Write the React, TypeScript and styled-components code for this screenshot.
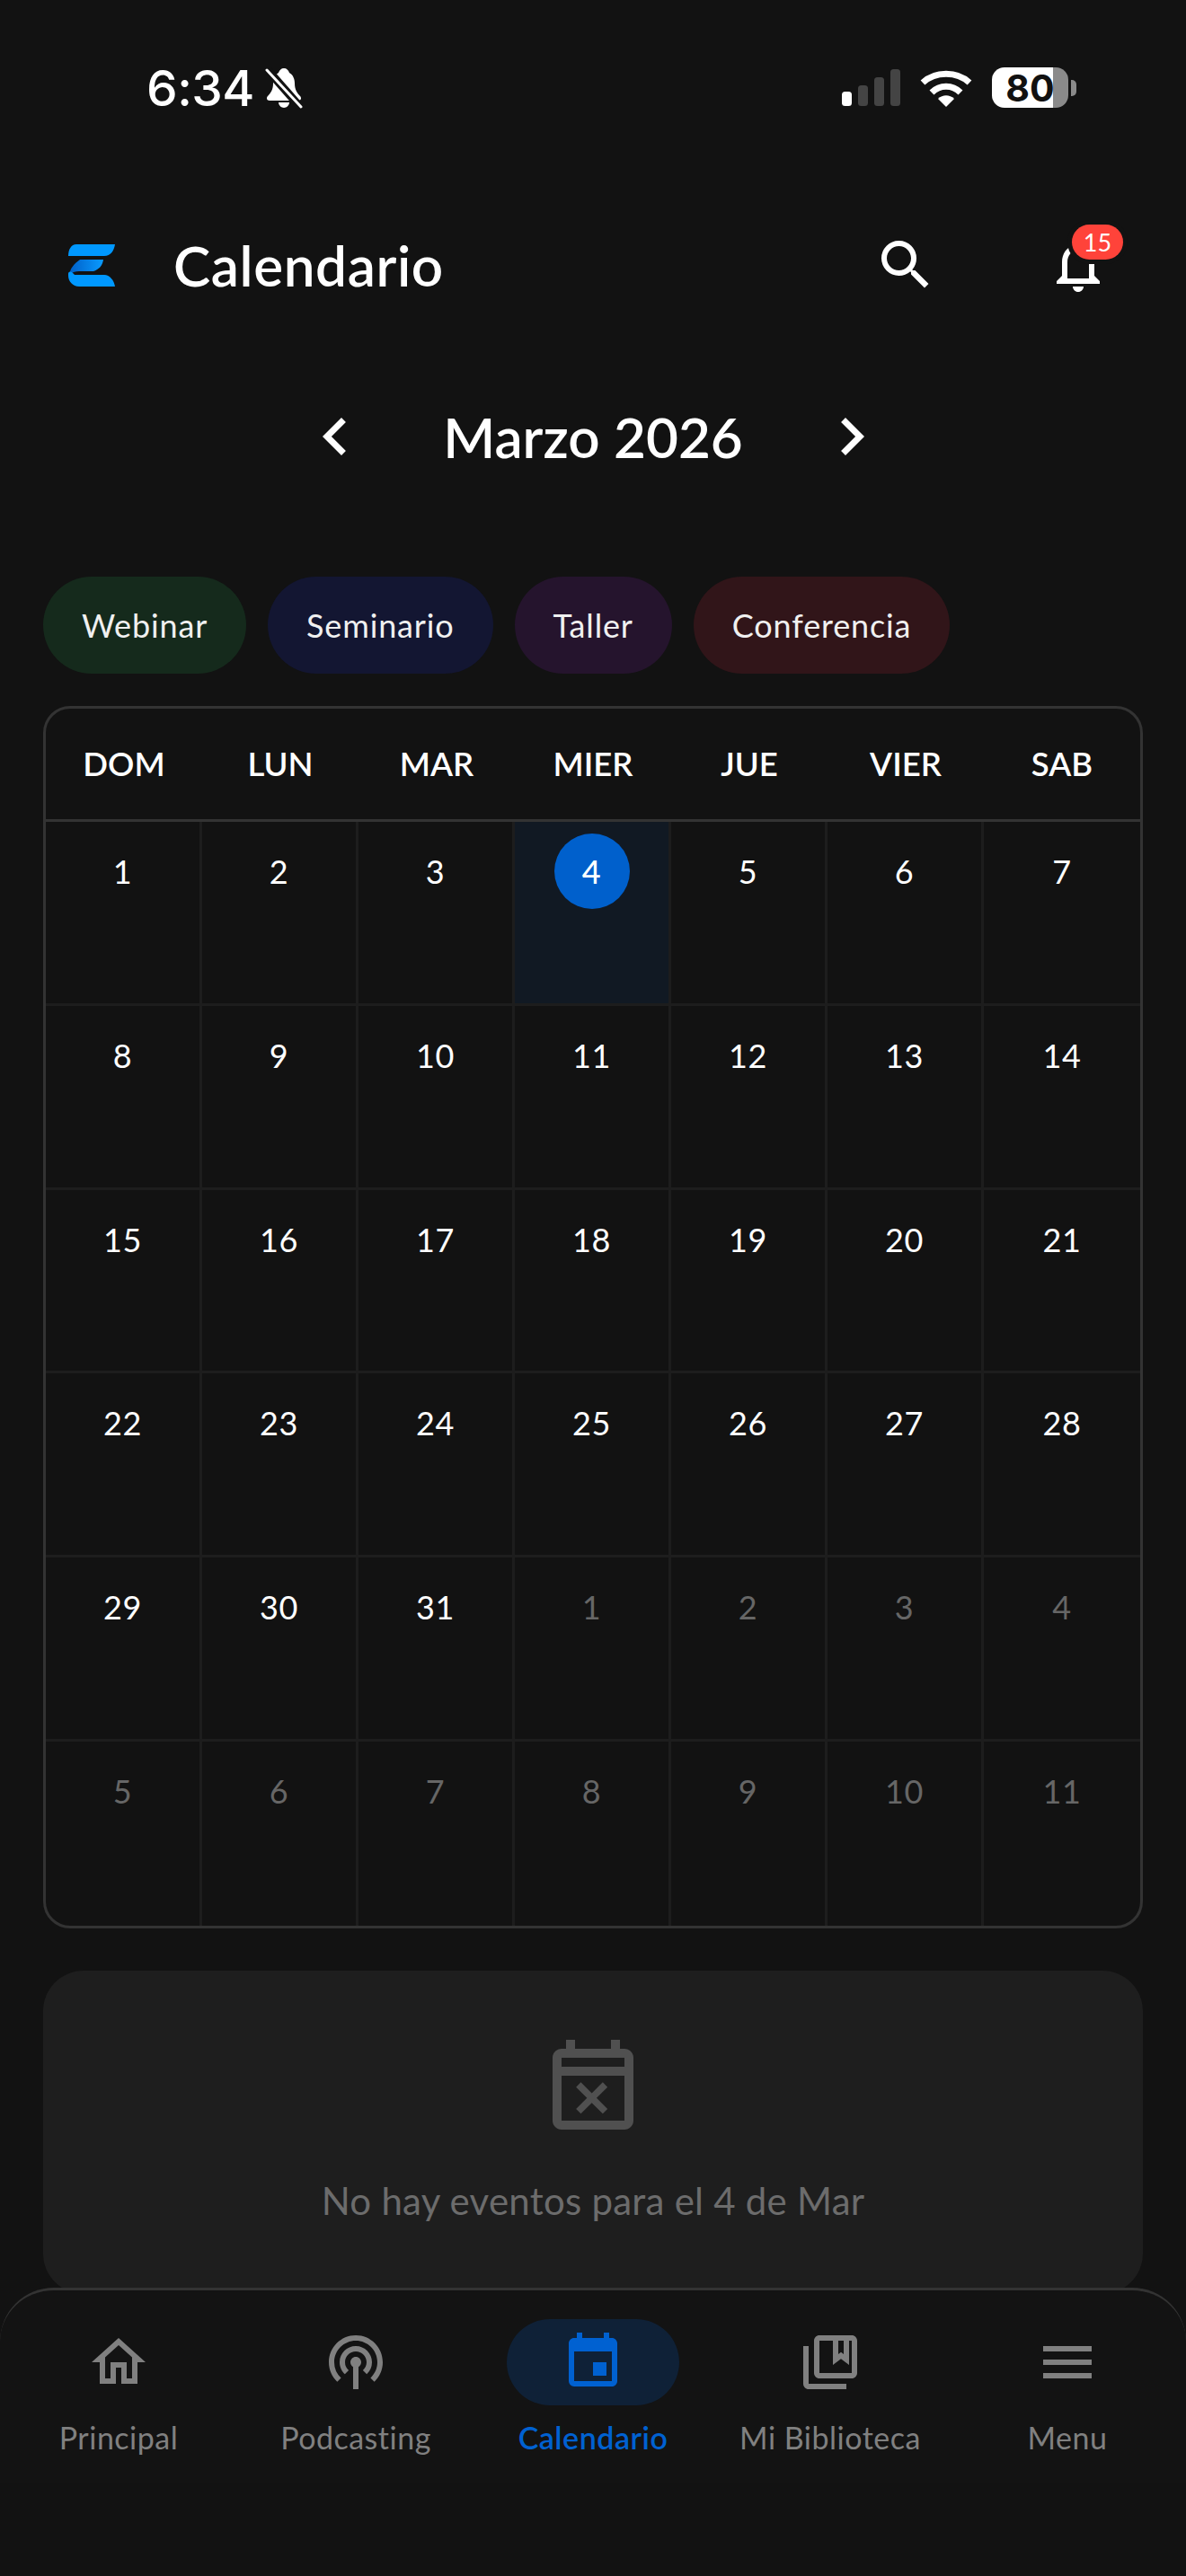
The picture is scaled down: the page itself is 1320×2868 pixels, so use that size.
import React from "react";
import styled, { createGlobalStyle } from "styled-components";
import {
  MdChevronLeft, MdChevronRight, MdEvent, MdMenu, MdNotificationsNone,
  MdOutlineCollectionsBookmark, MdOutlineEventBusy, MdOutlineHome, MdOutlinePodcasts, MdSearch,
} from "react-icons/md";

const Global = createGlobalStyle`
  html, body { margin: 0; padding: 0; background: #121212; }
  * { box-sizing: border-box; }
`;

const Screen = styled.div`
  position: relative;
  width: 1320px;
  height: 2868px;
  overflow: hidden;
  background: #121212;
  color: #fff;
  font-family: Lato, "Liberation Sans", sans-serif;
`;

const StatusBar = styled.div`
  display: flex;
  justify-content: space-between;
  align-items: center;
  height: 195px;
  padding: 0 122px 0 163px;
`;
const StatusGroup = styled.div`
  display: flex;
  align-items: center;
  gap: ${(p: { $gap: number }) => p.$gap}px;
`;
const Clock = styled.span`
  font-family: Inter, sans-serif;
  font-size: 55px;
  font-weight: 500;
  line-height: 56px;
  letter-spacing: -0.5px;
`;
const Battery = styled.div`
  display: flex;
  align-items: center;
  justify-content: center;
  width: 85px;
  height: 45px;
  border-radius: 14px;
  background: linear-gradient(90deg, #fff 0 80%, #8a8a8a 80% 100%);
  color: #111;
  font-family: Inter, sans-serif;
  font-size: 41px;
  font-weight: 700;
`;
const BatteryCap = styled.div`
  width: 6px;
  height: 18px;
  margin-left: 3px;
  border-radius: 0 5px 5px 0;
  background: #8a8a8a;
`;
const BatteryWrap = styled.div`
  display: flex;
  align-items: center;
`;

const Header = styled.header`
  display: flex;
  align-items: center;
  height: 200px;
  padding-left: 76px;
`;
const Title = styled.h1`
  margin: 0 0 0 65px;
  font-size: 62px;
  font-weight: 600;
  line-height: 72px;
  letter-spacing: 0.6px;
  flex: 1;
`;
const IconButton = styled.button`
  position: relative;
  display: flex;
  padding: 0;
  border: 0;
  background: none;
  color: #fff;
  margin-right: ${(p: { $mr: number }) => p.$mr}px;
`;
const Badge = styled.span`
  position: absolute;
  top: -9px;
  left: 29px;
  display: flex;
  align-items: center;
  justify-content: center;
  width: 57px;
  height: 39px;
  border-radius: 20px;
  background: #ff433a;
  box-shadow: 0 0 0 5px #121212;
  font-family: Lato, sans-serif;
  font-size: 27px;
  color: #fff;
`;

const MonthRow = styled.div`
  display: flex;
  align-items: center;
  justify-content: center;
  height: 120px;
  margin-top: 31px;
`;
const MonthTitle = styled.h2`
  margin: 0;
  width: 455px;
  text-align: center;
  font-size: 62px;
  font-weight: 600;
  line-height: 72px;
`;
const Chevron = styled.span`
  display: flex;
  width: 120px;
  justify-content: center;
  color: #fff;
`;

const Chips = styled.div`
  display: flex;
  gap: 24px;
  margin: 96px 48px 36px;
`;
const Chip = styled.div<{ $bg: string }>`
  display: flex;
  align-items: center;
  height: 108px;
  padding: 0 43px;
  border-radius: 54px;
  background: ${(p) => p.$bg};
  font-size: 36px;
  letter-spacing: 0.85px;
  color: #f0f0f0;
`;

const Calendar = styled.div`
  margin: 0 48px;
  border: 3px solid #333;
  border-radius: 30px;
  overflow: hidden;
`;
const WeekHeader = styled.div`
  display: grid;
  grid-template-columns: repeat(7, 1fr);
  height: 126px;
  padding-bottom: 1px;
  border-bottom: 3px solid #333;
`;
const WeekDay = styled.div`
  display: flex;
  align-items: center;
  justify-content: center;
  font-size: 36.5px;
  font-weight: 600;
`;
const Grid = styled.div`
  display: grid;
  grid-template-columns: repeat(7, 1fr);
  grid-auto-rows: 204.8px;
`;
const Cell = styled.div<{ $today?: boolean }>`
  display: flex;
  justify-content: center;
  padding-top: 13px;
  border-right: 3px solid #1d1d1d;
  border-bottom: 3px solid #1d1d1d;
  background: ${(p) => (p.$today ? "#111923" : "transparent")};
  &:nth-child(7n) { border-right: 0; }
  &:nth-last-child(-n + 7) { border-bottom: 0; }
`;
const DayNum = styled.span<{ $muted?: boolean; $today?: boolean }>`
  display: flex;
  align-items: center;
  justify-content: center;
  width: 84px;
  height: 84px;
  border-radius: 50%;
  font-size: 36px;
  letter-spacing: 0.5px;
  font-weight: ${(p) => (p.$today ? 500 : 400)};
  color: ${(p) => (p.$muted ? "#666" : "#fff")};
  background: ${(p) => (p.$today ? "#0060cc" : "transparent")};
`;

const EmptyCard = styled.div`
  display: flex;
  flex-direction: column;
  align-items: center;
  margin: 47px 48px 0;
  height: 360px;
  padding-top: 72px;
  border-radius: 45px;
  background: #1e1e1e;
  color: #505050;
`;
const EmptyText = styled.p`
  margin: 40px 0 0;
  font-size: 42px;
  line-height: 48px;
  letter-spacing: 0.25px;
  color: #6c6c6c;
`;

const Nav = styled.nav`
  position: absolute;
  left: 0;
  right: 0;
  top: 2547px;
  height: 321px;
  display: grid;
  grid-template-columns: repeat(5, 1fr);
  align-content: start;
  padding-top: 32px;
  background: linear-gradient(#131313 0 215px, #121212 215px);
  border-top: 3px solid #333;
  border-radius: 60px 60px 0 0;
`;
const NavItem = styled.div<{ $active?: boolean }>`
  display: flex;
  flex-direction: column;
  align-items: center;
  color: ${(p) => (p.$active ? "#0061d1" : "#808080")};
`;
const NavIcon = styled.div<{ $active?: boolean }>`
  display: flex;
  align-items: center;
  justify-content: center;
  width: 192px;
  height: 96px;
  border-radius: 48px;
  background: ${(p) => (p.$active ? "#0f2137" : "transparent")};
`;
const NavLabel = styled.span<{ $active?: boolean }>`
  margin-top: 16px;
  font-size: 34px;
  line-height: 40px;
  font-weight: ${(p) => (p.$active ? 600 : 400)};
  letter-spacing: 0.5px;
`;

const Logo = () => (
  <svg width="52" height="47" viewBox="0 0 52 47">
    <defs>
      <linearGradient id="lg" x1="0" y1="0" x2="1" y2="0">
        <stop offset="0" stopColor="#0060c8" />
        <stop offset="1" stopColor="#0a9bff" />
      </linearGradient>
    </defs>
    <path d="M9 0H52C51 7 47 13 40 13H0C0 6 3 0 9 0Z" fill="#0098ff" />
    <path d="M13 17H39C38 24 34 28 28 30H12C8 30 5 31 2 33C1 28 7 21 13 17Z" fill="url(#lg)" />
    <path d="M0 33C0 30 3 29 7 34H40C46 34 51 40 52 47H12C5 47 0 41 0 35Z" fill="#0098ff" />
  </svg>
);
const MutedBell = () => (
  <svg width="42" height="46" viewBox="0 0 42 46" fill="#fff">
    <path d="M21 1c3 0 5 2 6 5 4 2 6 7 6 12 0 7 3 11 6 14 2 2 1 5-2 5H5c-3 0-4-3-2-5 3-3 6-7 6-14 0-5 2-10 6-12 1-3 3-5 6-5Z" />
    <path d="M15 39h12c0 3-3 6-6 6s-6-3-6-6Z" />
    <path d="M3 3l36 41" stroke="#121212" strokeWidth="9" />
    <path d="M2 3l38 41" stroke="#fff" strokeWidth="3" strokeLinecap="round" />
  </svg>
);
const Signal = () => (
  <svg width="65" height="41" viewBox="0 0 65 41">
    <rect x="0" y="25" width="11" height="16" rx="3.5" fill="#fff" />
    <rect x="18" y="18" width="11" height="23" rx="3.5" fill="#444" />
    <rect x="36" y="9" width="11" height="32" rx="3.5" fill="#444" />
    <rect x="54" y="0" width="11" height="41" rx="3.5" fill="#444" />
  </svg>
);
const Wifi = () => (
  <svg width="58" height="42" viewBox="0 0 58 42" fill="none" stroke="#fff">
    <path d="M3 15C17 2 41 2 55 15" strokeWidth="7" />
    <path d="M13 26C22 17 36 17 45 26" strokeWidth="7" />
    <path d="M20 33C25 28 33 28 38 33L29 42Z" fill="#fff" stroke="none" />
  </svg>
);

const chips = [
  ["Webinar", "#152a1c"],
  ["Seminario", "#131632"],
  ["Taller", "#25142d"],
  ["Conferencia", "#311519"],
];
const week = ["DOM", "LUN", "MAR", "MIER", "JUE", "VIER", "SAB"];
const days: [number, boolean][] = [
  ...Array.from({ length: 31 }, (_, i) => [i + 1, false] as [number, boolean]),
  ...Array.from({ length: 11 }, (_, i) => [i + 1, true] as [number, boolean]),
];
const nav = [
  ["Principal", <MdOutlineHome size={72} />],
  ["Podcasting", <MdOutlinePodcasts size={72} />],
  ["Calendario", <MdEvent size={72} />],
  ["Mi Biblioteca", <MdOutlineCollectionsBookmark size={72} />],
  ["Menu", <MdMenu size={72} />],
] as const;

export default function App() {
  return (
    <Screen>
      <Global />
      <StatusBar>
        <StatusGroup $gap={12}>
          <Clock>6:34</Clock>
          <MutedBell />
        </StatusGroup>
        <StatusGroup $gap={22}>
          <Signal />
          <Wifi />
          <BatteryWrap>
            <Battery>80</Battery>
            <BatteryCap />
          </BatteryWrap>
        </StatusGroup>
      </StatusBar>
      <Header>
        <Logo />
        <Title>Calendario</Title>
        <IconButton $mr={120}><MdSearch size={72} /></IconButton>
        <IconButton $mr={84}>
          <MdNotificationsNone size={72} />
          <Badge>15</Badge>
        </IconButton>
      </Header>
      <MonthRow>
        <Chevron><MdChevronLeft size={84} /></Chevron>
        <MonthTitle>Marzo 2026</MonthTitle>
        <Chevron><MdChevronRight size={84} /></Chevron>
      </MonthRow>
      <Chips>
        {chips.map(([label, bg]) => <Chip key={label} $bg={bg}>{label}</Chip>)}
      </Chips>
      <Calendar>
        <WeekHeader>
          {week.map((d) => <WeekDay key={d}>{d}</WeekDay>)}
        </WeekHeader>
        <Grid>
          {days.map(([n, muted], i) => {
            const today = i === 3;
            return (
              <Cell key={i} $today={today}>
                <DayNum $muted={muted} $today={today}>{n}</DayNum>
              </Cell>
            );
          })}
        </Grid>
      </Calendar>
      <EmptyCard>
        <MdOutlineEventBusy size={120} />
        <EmptyText>No hay eventos para el 4 de Mar</EmptyText>
      </EmptyCard>
      <Nav>
        {nav.map(([label, icon], i) => (
          <NavItem key={label} $active={i === 2}>
            <NavIcon $active={i === 2}>{icon}</NavIcon>
            <NavLabel $active={i === 2}>{label}</NavLabel>
          </NavItem>
        ))}
      </Nav>
    </Screen>
  );
}
